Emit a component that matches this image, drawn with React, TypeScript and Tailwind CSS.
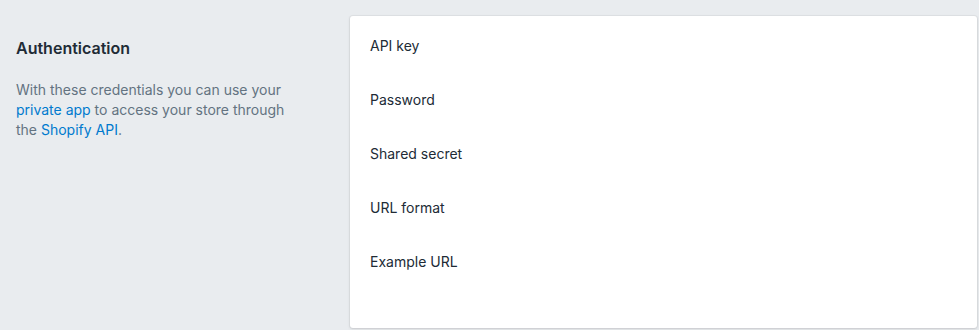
import React from "react";

export default function App() {
  const rows = ["API key", "Password", "Shared secret", "URL format", "Example URL"];
  return (
    <div
      className="w-[979px] h-[330px] bg-[#e9ecef] flex pt-4 overflow-hidden"
      style={{ fontFamily: 'Inter, "Noto Sans", sans-serif' }}
    >
      <div className="w-[350px] shrink-0 pl-4 pr-5 pt-5">
        <h2 className="text-[16px] leading-6 font-semibold text-[#212b36]">Authentication</h2>
        <p className="mt-5 w-[280px] text-[14px] leading-5 text-[#637381]">
          With these credentials you can use your{" "}
          <span className="text-[#007ace]">private app</span> to access your store through the{" "}
          <span className="text-[#007ace]">Shopify API</span>.
        </p>
      </div>
      <div className="w-[627px] h-[312px] bg-white rounded-[3px] shadow-[0_0_0_1px_rgba(63,63,68,0.05),0_1px_3px_0_rgba(63,63,68,0.15)] px-5 pt-5 flex flex-col gap-[34px]">
        {rows.map((r) => (
          <div key={r} className="text-[14px] leading-5 text-[#212b36]">
            {r}
          </div>
        ))}
      </div>
    </div>
  );
}
